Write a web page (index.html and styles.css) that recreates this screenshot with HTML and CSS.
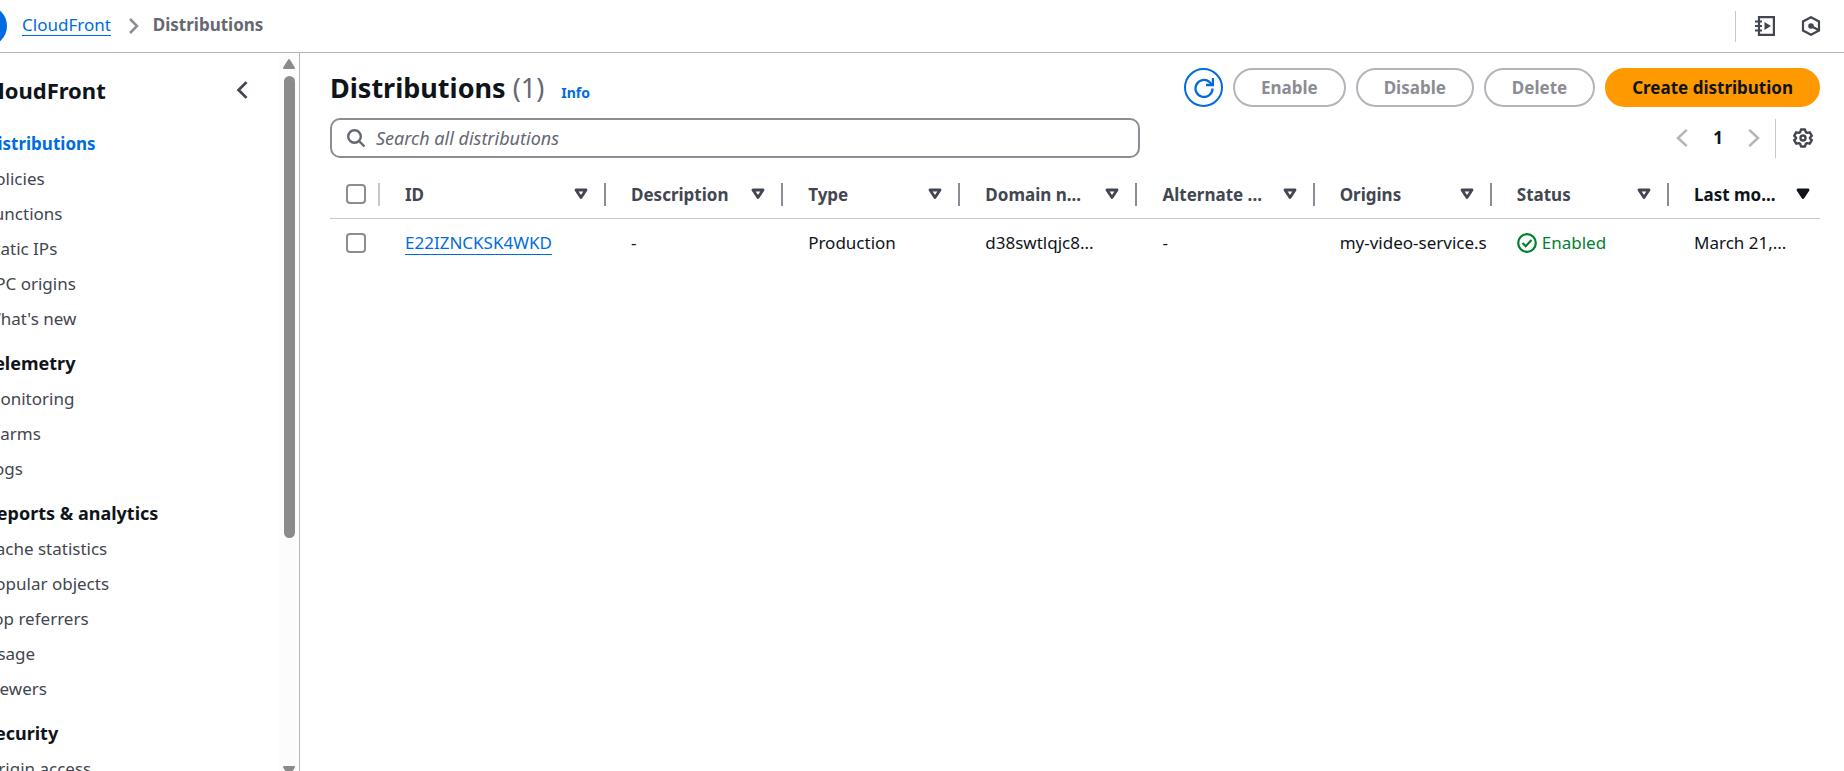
FILE: index.html
```html
<!DOCTYPE html>
<html lang="en">
<head>
<meta charset="utf-8">
<meta name="viewport" content="width=device-width, initial-scale=1">
<title>CloudFront Distributions</title>
<link rel="stylesheet" href="styles.css">
</head>
<body>
<svg class="defs" aria-hidden="true">
  <symbol id="sort" viewBox="0 0 14 12"><path d="M2 2h10L7 9.500z" fill="none" stroke="currentColor" stroke-width="2.800" stroke-linejoin="round"/></symbol>
  <symbol id="left" viewBox="0 0 16 16"><path d="M11 1.500 4 8l7 6.500" fill="none" stroke="currentColor" stroke-width="2"/></symbol>
  <symbol id="right" viewBox="0 0 16 16"><path d="m5 1.500 7 6.500-7 6.500" fill="none" stroke="currentColor" stroke-width="2"/></symbol>
</svg>
<header class="topbar">
  <button class="menu" aria-label="Open navigation"></button>
  <nav class="crumbs" aria-label="Breadcrumbs">
    <a class="link" href="#">CloudFront</a>
    <svg class="crumb-arrow" viewBox="0 0 12 18"><path d="m2 2 7 7-7 7" fill="none" stroke="currentColor" stroke-width="2.500"/></svg>
    <span class="current">Distributions</span>
  </nav>
  <div class="tools">
    <button class="icon-button" aria-label="Tutorials"><svg class="icon" viewBox="0 0 20 20" fill="none" stroke="currentColor" stroke-width="2.200"><path d="M4 1.100h14.900v17.800H4zM0 5.500h7M0 10h7M0 14.500h7"/><path d="m9.500 6 6.500 4-6.500 4z" fill="currentColor" stroke="none"/></svg></button>
    <button class="icon-button" aria-label="Info"><svg class="icon" viewBox="0 0 20 20" fill="none" stroke="currentColor" stroke-width="2.200"><path d="M18 14.500 10 18.800l-8-4.300v-9l8-4.300 8 4.300zM10 10l7.500 4"/><circle cx="10" cy="10" r="2.800" fill="currentColor" stroke="none"/></svg></button>
  </div>
</header>
<div class="shell">
  <aside class="side">
    <div class="side-content">
      <div class="side-head">
        <h2 class="side-title">CloudFront</h2>
        <button class="icon-button" aria-label="Close navigation"><svg class="chevron" viewBox="0 0 16 16"><path d="M12 1 5 8l7 7" fill="none" stroke="currentColor" stroke-width="2.500"/></svg></button>
      </div>
      <nav class="side-nav">
        <a class="item active" href="#">Distributions</a>
        <a class="item" href="#">Policies</a>
        <a class="item" href="#">Functions</a>
        <a class="item" href="#">Static IPs</a>
        <a class="item" href="#">VPC origins</a>
        <a class="item" href="#">What's new</a>
        <h3 class="group">Telemetry</h3>
        <a class="item" href="#">Monitoring</a>
        <a class="item" href="#">Alarms</a>
        <a class="item" href="#">Logs</a>
        <h3 class="group">Reports &amp; analytics</h3>
        <a class="item" href="#">Cache statistics</a>
        <a class="item" href="#">Popular objects</a>
        <a class="item" href="#">Top referrers</a>
        <a class="item" href="#">Usage</a>
        <a class="item" href="#">Viewers</a>
        <h3 class="group">Security</h3>
        <a class="item" href="#">Origin access</a>
      </nav>
    </div>
    <div class="scrollbar" aria-hidden="true">
      <svg class="arrow" viewBox="0 0 12 10"><path d="M6 1 11 9H1z" fill="currentColor" stroke="currentColor" stroke-width="2" stroke-linejoin="round"/></svg>
      <div class="track"><div class="thumb"></div></div>
      <svg class="arrow" viewBox="0 0 12 10"><path d="M6 9 1 1h10z" fill="currentColor" stroke="currentColor" stroke-width="2" stroke-linejoin="round"/></svg>
    </div>
  </aside>
  <main class="main">
    <div class="heading">
      <h1 class="title">Distributions <span class="count">(1)</span></h1>
      <a class="info" href="#">Info</a>
      <div class="actions">
        <button class="btn refresh" aria-label="Refresh"><svg class="icon" viewBox="0 0 20 20" fill="none" stroke="currentColor" stroke-width="2.300"><path d="M18.500 10.500A8.500 8.500 0 1 1 15.500 4l3 3"/><path d="M19 0v7h-7"/></svg></button>
        <button class="btn" disabled>Enable</button>
        <button class="btn" disabled>Disable</button>
        <button class="btn" disabled>Delete</button>
        <button class="btn primary">Create distribution</button>
      </div>
    </div>
    <div class="filters">
      <label class="search">
        <svg class="search-icon" viewBox="0 0 20 20" fill="none" stroke="currentColor" stroke-width="2.400"><circle cx="8.500" cy="8.500" r="6.300"/><path d="m13 13 5.500 5.500"/></svg>
        <input class="search-input" type="search" aria-label="Search all distributions" placeholder="Search all distributions">
      </label>
      <div class="pages">
        <button class="icon-button muted" aria-label="Previous page"><svg class="icon" viewBox="0 0 16 16"><use href="#left"/></svg></button>
        <button class="page">1</button>
        <button class="icon-button muted" aria-label="Next page"><svg class="icon" viewBox="0 0 16 16"><use href="#right"/></svg></button>
      </div>
      <button class="settings" aria-label="Preferences"><svg class="icon" viewBox="0 0 20 20" fill="none" stroke="currentColor" stroke-width="2.400" stroke-linejoin="round"><path d="M8 1.500h4l.8 2.600 1.400.8 2.600-.6 2 3.500L17 9.500v1l1.800 1.700-2 3.500-2.600-.6-1.400.8-.8 2.600H8l-.8-2.600-1.400-.8-2.600.6-2-3.500L3 10.500v-1L1.200 7.800l2-3.500 2.600.6 1.400-.8z"/><circle cx="10" cy="10" r="2.500"/></svg></button>
    </div>
    <table class="table">
      <colgroup><col class="col-select"><col class="col-id"><col><col><col><col><col><col><col class="col-last"></colgroup>
      <thead>
        <tr>
          <th class="select"><input class="check" type="checkbox" aria-label="Select all"></th>
          <th><button class="sort"><span class="label">ID</span><svg class="caret"><use href="#sort"/></svg></button></th>
          <th><button class="sort"><span class="label">Description</span><svg class="caret"><use href="#sort"/></svg></button></th>
          <th><button class="sort"><span class="label">Type</span><svg class="caret"><use href="#sort"/></svg></button></th>
          <th><button class="sort"><span class="label">Domain n...</span><svg class="caret"><use href="#sort"/></svg></button></th>
          <th><button class="sort"><span class="label">Alternate ...</span><svg class="caret"><use href="#sort"/></svg></button></th>
          <th><button class="sort"><span class="label">Origins</span><svg class="caret"><use href="#sort"/></svg></button></th>
          <th><button class="sort"><span class="label">Status</span><svg class="caret"><use href="#sort"/></svg></button></th>
          <th class="sorted"><button class="sort"><span class="label">Last mo...</span><svg class="caret" viewBox="0 0 14 12"><path d="M2 2h10L7 9.500z" fill="currentColor" stroke="currentColor" stroke-width="2.800" stroke-linejoin="round"/></svg></button></th>
        </tr>
      </thead>
      <tbody>
        <tr>
          <td class="select"><input class="check" type="checkbox" aria-label="Select E22IZNCKSK4WKD"></td>
          <td><a class="link" href="#">E22IZNCKSK4WKD</a></td>
          <td>-</td>
          <td>Production</td>
          <td>d38swtlqjc8...</td>
          <td>-</td>
          <td>my-video-service.s</td>
          <td><span class="status"><svg class="icon" viewBox="0 0 20 20" fill="none" stroke="currentColor" stroke-width="2.200"><circle cx="10" cy="10" r="8.800"/><path d="m5.500 10 3.200 3.200 5.800-6.200"/></svg>Enabled</span></td>
          <td>March 21,...</td>
        </tr>
      </tbody>
    </table>
  </main>
</div>
</body>
</html>
```
FILE: styles.css
```css
* { box-sizing: border-box; }

body {
  display: flex;
  flex-direction: column;
  height: 100vh;
  margin: 0;
  overflow: hidden;
  background: #fff;
  color: #0f141a;
  font-family: "Noto Sans", sans-serif;
  font-size: 17px;
  line-height: 24px;
}

button, input { font: inherit; color: inherit; }
button { margin: 0; padding: 0; border: 0; background: none; }
h1, h2, h3 { margin: 0; }
svg { display: block; flex: none; }

.defs { position: absolute; width: 0; height: 0; }
.icon { width: 20px; height: 20px; }
.icon-button { display: flex; color: #424650; }
.muted { color: #b4b4bb; }
.link {
  border-bottom: 1px solid #006ce0;
  color: #006ce0;
  text-decoration: none;
}

.topbar {
  display: flex;
  flex: none;
  align-items: center;
  height: 53px;
  padding-right: 23px;
  border-bottom: 1px solid #b4b4bb;
}
.menu {
  flex: none;
  width: 40px;
  height: 40px;
  margin-left: -33px;
  border-radius: 50%;
  background: #006ce0;
}
.crumbs { display: flex; align-items: center; margin-left: 15px; padding-bottom: 2px; }
.crumbs .link { line-height: 21px; }
.crumb-arrow { width: 12px; height: 18px; margin: 2px 13px 0 17px; color: #8c8c94; }
.current { color: #656871; font-weight: 700; }
.tools {
  display: flex;
  gap: 26px;
  align-items: center;
  height: 31px;
  margin-left: auto;
  padding-left: 19px;
  border-left: 1px solid #c6c6cd;
}

.shell { display: flex; flex: 1; min-height: 0; }
.side {
  display: flex;
  flex: none;
  width: 300px;
  border-right: 1px solid #b4b4bb;
}
.side-content { flex: 1; min-width: 0; overflow: hidden; }
.side-head {
  display: flex;
  align-items: center;
  justify-content: space-between;
  height: 73px;
  padding-right: 28px;
}
.side-title { margin-left: -16px; font-size: 22px; line-height: 28px; }
.chevron { width: 18px; height: 18px; }
.side-nav { margin-left: -15px; }
.item {
  display: block;
  height: 35px;
  color: #424650;
  line-height: 35px;
  text-decoration: none;
  white-space: nowrap;
}
.active { color: #006ce0; font-weight: 700; }
.group { height: 36px; margin-top: 9px; font-size: 18px; line-height: 36px; }
.scrollbar {
  display: flex;
  flex-direction: column;
  align-items: center;
  width: 20px;
  margin-bottom: -5px;
  padding: 6px 0 0;
  background: #fcfcfc;
  color: #8b8b8b;
}
.arrow { width: 12px; height: 10px; }
.track { flex: 1; padding-top: 7px; }
.thumb { width: 11px; height: 67%; border-radius: 6px; background: #8b8b8b; }

.main { flex: 1; min-width: 0; padding: 15px 24px 0 30px; }
.heading { display: flex; align-items: center; }
.title { font-size: 27px; line-height: 32px; }
.count { color: #656871; font-weight: 400; }
.info {
  margin: 10px 0 0 17px;
  color: #006ce0;
  font-size: 14px;
  font-weight: 700;
  line-height: 20px;
  text-decoration: none;
}
.actions { display: flex; gap: 10px; margin-left: auto; }
.btn {
  height: 39px;
  padding: 0 26px;
  border: 2px solid #b4b4bb;
  border-radius: 20px;
  color: #8c8c94;
  font-weight: 700;
  line-height: 32px;
}
.refresh { width: 39px; padding: 0 8px; border-color: #006ce0; color: #006ce0; }
.primary { padding: 0 25px; border-color: #ff9900; background: #ff9900; color: #0f141a; }

.filters { display: flex; align-items: center; margin-top: 11px; }
.search {
  display: flex;
  flex: 0 1 810px;
  align-items: center;
  height: 40px;
  padding: 0 14px;
  border: 2px solid #8c8c94;
  border-radius: 10px;
}
.search-icon { width: 20px; height: 20px; color: #656871; }
.search-input {
  flex: 1;
  min-width: 0;
  margin-left: 10px;
  padding: 0;
  border: 0;
  outline: 0;
  background: none;
  font-size: 18px;
}
.search-input::placeholder { color: #656871; font-style: italic; opacity: 1; }
.pages { display: flex; gap: 19px; align-items: center; margin-left: auto; }
.page { min-width: 12px; font-weight: 700; }
.settings {
  display: flex;
  align-items: center;
  height: 39px;
  margin-left: 12px;
  padding: 0 7px 0 17px;
  border-left: 1px solid #c6c6cd;
  color: #424650;
}

.table {
  width: 100%;
  margin-top: 12px;
  border-collapse: separate;
  border-spacing: 0;
  table-layout: fixed;
}
.col-select { width: 50px; }
.col-id { width: 226px; }
.col-last { width: 151px; }
th {
  height: 49px;
  padding: 0;
  border-bottom: 1px solid #c6c6cd;
  color: #424650;
  text-align: left;
}
.sorted { color: #0f141a; }
.sort {
  display: flex;
  align-items: center;
  width: 100%;
  height: 23px;
  padding: 0 16px 0 25px;
  border-right: 2px solid #8c8c94;
  font-weight: 700;
}
.sorted .sort { padding-right: 10px; border: 0; }
.label { flex: 1; padding-top: 2px; overflow: hidden; text-align: left; white-space: nowrap; }
.caret { width: 14px; height: 12px; }
td {
  height: 48px;
  padding: 0 0 0 25px;
  overflow: hidden;
  white-space: nowrap;
}
.select { padding: 0; }
.check {
  display: block;
  width: 20px;
  height: 20px;
  margin: 0 0 0 16px;
  border: 2px solid #8c8c94;
  border-radius: 4px;
  appearance: none;
}
th.select {
  background: linear-gradient(#c6c6cd, #c6c6cd) right center / 2px 23px no-repeat;
}
td .link { display: inline-block; line-height: 22px; }
.status { display: flex; gap: 5px; align-items: center; color: #00802f; }
```
